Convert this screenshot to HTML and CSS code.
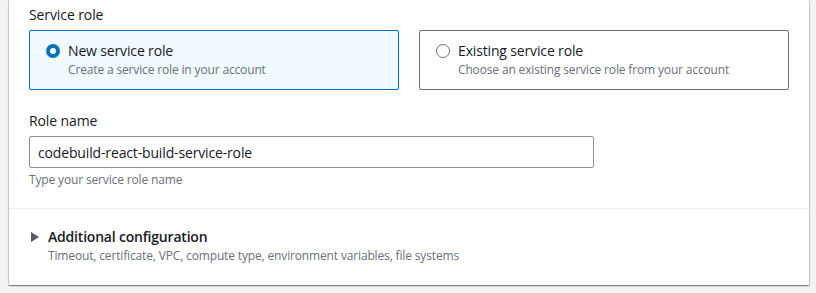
FILE: index.html
```html
<html lang="en">
<head>
    <meta charset="UTF-8">
    <meta name="viewport" content="width=device-width, initial-scale=1.0">
    <title>Service role</title>
    <link rel="stylesheet" href="styles.css">
</head>
<body>
    <div class="card">
        <div class="card-body">
            <div class="field">
                <div class="field-label">Service role</div>
                <div class="tiles">
                    <label class="tile tile-selected">
                        <span class="radio radio-checked"></span>
                        <span class="tile-text">
                            <span class="tile-title">New service role</span>
                            <span class="tile-desc">Create a service role in your account</span>
                        </span>
                    </label>
                    <label class="tile">
                        <span class="radio"></span>
                        <span class="tile-text">
                            <span class="tile-title">Existing service role</span>
                            <span class="tile-desc">Choose an existing service role from your account</span>
                        </span>
                    </label>
                </div>
            </div>

            <div class="field field-spaced">
                <label class="field-label" for="roleName">Role name</label>
                <input type="text" id="roleName" class="input" value="codebuild-react-build-service-role">
                <div class="hint">Type your service role name</div>
            </div>
        </div>

        <div class="expander">
            <div class="expander-head">
                <svg class="caret" width="8" height="10" viewBox="0 0 8 10">
                    <polygon points="0,0 8,5 0,10" fill="#545b64"/>
                </svg>
                <span class="expander-title">Additional configuration</span>
            </div>
            <div class="expander-desc">Timeout, certificate, VPC, compute type, environment variables, file systems</div>
        </div>
    </div>
</body>
</html>
```

FILE: styles.css
```css
body {
    margin: 0;
    background-color: #f2f3f3;
    font-family: "Open Sans", "Noto Sans", Arial, sans-serif;
    font-size: 14px;
    line-height: 22px;
    color: #16191f;
}

.card {
    width: 800px;
    margin-left: 9px;
    height: 285px;
    box-sizing: border-box;
    background-color: #fff;
    box-shadow: 0 1px 1px 0 rgba(0, 28, 36, 0.3), 1px 1px 1px 0 rgba(0, 28, 36, 0.15), -1px 1px 1px 0 rgba(0, 28, 36, 0.15);
}

.card-body {
    padding: 4px 20px 20px;
    border-bottom: 1px solid #eaeded;
}

.field {
    display: flex;
    flex-direction: column;
}

.field-spaced {
    margin-top: 20px;
}

.field-label {
    margin-bottom: 4px;
    color: #16191f;
    letter-spacing: -0.1px;
}

.tiles {
    display: grid;
    grid-template-columns: 1fr 1fr;
    gap: 20px;
}

.tile {
    display: flex;
    gap: 8px;
    padding: 9px 16px 11px;
    border: 1px solid #687078;
    border-radius: 2px;
    cursor: pointer;
}

.tile-selected {
    border-color: #0073bb;
    background-color: #f1faff;
}

.radio {
    flex: none;
    width: 14px;
    height: 14px;
    margin-top: 4px;
    box-sizing: border-box;
    border: 1.5px solid #687078;
    border-radius: 50%;
    background-color: #fff;
}

.radio-checked {
    border: 4.5px solid #0073bb;
}

.tile-text {
    display: flex;
    flex-direction: column;
}

.tile-title {
    letter-spacing: -0.15px;
}

.tile-desc {
    font-size: 12px;
    line-height: 16px;
    color: #687078;
    letter-spacing: -0.15px;
}

.input {
    width: 565px;
    height: 32px;
    box-sizing: border-box;
    padding: 0 8px;
    font-family: inherit;
    font-size: 14px;
    letter-spacing: -0.15px;
    color: #16191f;
    border: 1px solid #879596;
    border-radius: 2px;
    outline: none;
}

.hint {
    margin-top: 4px;
    font-size: 12px;
    line-height: 16px;
    color: #687078;
    letter-spacing: -0.15px;
}

.expander {
    padding: 17px 20px;
}

.expander-head {
    display: flex;
    align-items: center;
}

.caret {
    margin: 0 9px 0 2px;
}

.expander-title {
    font-weight: 600;
    color: #16191f;
    letter-spacing: -0.2px;
}

.expander-desc {
    padding-left: 19px;
    font-size: 12px;
    line-height: 16px;
    color: #687078;
    letter-spacing: -0.15px;
}
```
